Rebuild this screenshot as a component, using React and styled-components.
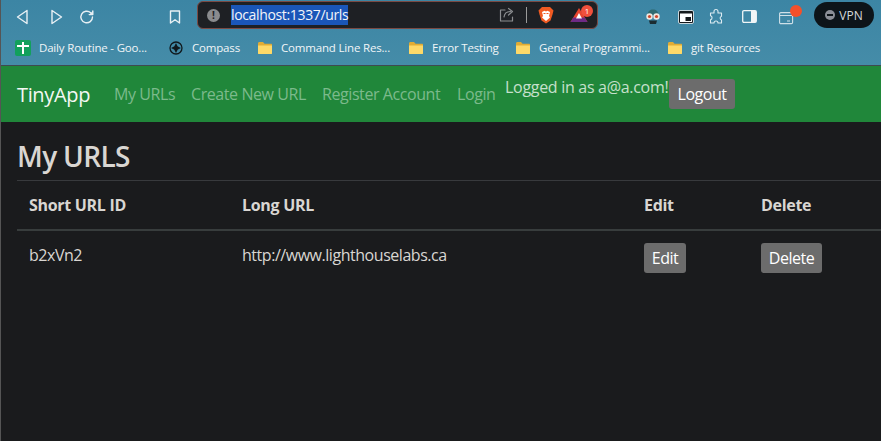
import styled, { createGlobalStyle } from 'styled-components';

const Global = createGlobalStyle`
  html, body { margin: 0; padding: 0; background: #1a1b1d; }
  body { font-family: "Open Sans", "Noto Sans", sans-serif; overflow: hidden; }
  * { box-sizing: border-box; }
`;

const Page = styled.div`
  width: 881px;
  height: 441px;
  border-left: 1px solid #555;
  overflow: hidden;
  background: #1a1b1d;
`;

const Chrome = styled.div`
  height: 66px;
  background: linear-gradient(#3c85a4, #458ca8);
  border-bottom: 1px solid #3f4a50;
`;

const Toolbar = styled.div`
  height: 33px;
  display: flex;
  align-items: center;
  position: relative;
`;

const ToolIcon = styled.span`
  display: flex;
  width: ${({ $w }) => $w || 18}px;
  height: 18px;
  margin-left: ${({ $ml }) => $ml || 0}px;
  align-items: center;
  justify-content: center;
  flex: none;
`;

const Address = styled.div`
  width: 401px;
  height: 28px;
  margin-left: 13px;
  margin-top: -3px;
  background: #1e2024;
  border: 1px solid #7a4a44;
  border-radius: 6px;
  display: flex;
  align-items: center;
  padding-left: 9px;
  flex: none;
`;

const InfoDot = styled.span`
  width: 13px;
  height: 13px;
  border-radius: 50%;
  background: #8a8b8e;
  color: #1e2024;
  font-size: 10px;
  font-weight: 700;
  line-height: 13px;
  text-align: center;
  flex: none;
`;

const UrlText = styled.span`
  margin-left: 11px;
  background: #1a56b8;
  color: #f2f4f8;
  font-size: 14px;
  line-height: 20px;
  letter-spacing: -0.35px;
  width: 117px;
  white-space: nowrap;
`;

const Divider = styled.span`
  width: 1px;
  height: 16px;
  background: #9a9a9a;
  margin-left: 10px;
  flex: none;
`;

const BadgeWrap = styled.span`
  position: relative;
  display: flex;
  width: 18px;
  height: 18px;
  margin-left: ${({ $ml }) => $ml || 0}px;
  flex: none;
`;

const CountBadge = styled.span`
  position: absolute;
  top: -1px;
  right: -5px;
  width: 12px;
  height: 12px;
  border-radius: 50%;
  background: #f0503c;
  color: #fff;
  font-size: 8px;
  line-height: 12px;
  text-align: center;
`;

const OrangeDot = styled.span`
  position: absolute;
  top: -3px;
  right: -5px;
  width: 12px;
  height: 12px;
  border-radius: 50%;
  background: #f4502a;
`;

const VpnPill = styled.div`
  width: 60px;
  height: 26px;
  margin-left: 17px;
  margin-top: -3px;
  border-radius: 13px;
  background: #0d1419;
  color: #d5d8db;
  font-size: 12px;
  display: flex;
  align-items: center;
  justify-content: center;
  gap: 4px;
  flex: none;
`;

const VpnDot = styled.span`
  width: 10px;
  height: 10px;
  border-radius: 50%;
  background: #8b8e96;
  display: flex;
  align-items: center;
  justify-content: center;
  &::after {
    content: '';
    width: 6px;
    height: 2px;
    background: #0d1419;
  }
`;

const Bookmarks = styled.div`
  height: 32px;
  display: flex;
  align-items: center;
  padding-left: 14px;
  padding-bottom: 3px;
`;

const Bookmark = styled.div`
  display: flex;
  align-items: center;
  gap: ${({ $gap }) => $gap || 8}px;
  width: ${({ $w }) => $w}px;
  flex: none;
  color: #f1f5f7;
  font-size: 11.5px;
  letter-spacing: -0.18px;
  white-space: nowrap;
`;

const SheetIcon = styled.span`
  width: 16px;
  height: 16px;
  border-radius: 2px;
  background: #12a05c;
  position: relative;
  flex: none;
  &::before {
    content: '';
    position: absolute;
    left: 2px;
    right: 2px;
    top: 5px;
    height: 2px;
    background: #fff;
  }
  &::after {
    content: '';
    position: absolute;
    left: 7px;
    top: 2px;
    bottom: 2px;
    width: 2px;
    background: #fff;
  }
`;

const Navbar = styled.nav`
  height: 56px;
  background: #20873a;
  display: flex;
  align-items: center;
  padding: 0 16px;
`;

const Brand = styled.a`
  color: #f4f8f4;
  font-size: 20px;
  letter-spacing: -0.35px;
  margin-right: 24px;
  width: 73px;
  white-space: nowrap;
`;

const NavLink = styled.a`
  color: #7cba8c;
  font-size: 16px;
  letter-spacing: -0.42px;
  width: ${({ $w }) => $w}px;
  white-space: nowrap;
  flex: none;
`;

const Greeting = styled.div`
  color: #c6e0cc;
  font-size: 16px;
  letter-spacing: -0.3px;
  width: 164px;
  height: 24px;
  line-height: 24px;
  white-space: nowrap;
  flex: none;
  align-self: flex-start;
  margin-top: 9px;
`;

const Button = styled.button`
  font-family: inherit;
  font-size: 16px;
  letter-spacing: -0.5px;
  line-height: 24px;
  color: #fff;
  background: #6c6c6c;
  border: 0;
  border-radius: 3px;
  height: 30px;
  width: ${({ $w }) => $w}px;
  padding: 0;
  display: block;
`;

const Content = styled.main`
  padding-left: 16px;
`;

const Title = styled.h2`
  margin: 0;
  padding: 17px 0 7px;
  color: #d9d6d2;
  font-size: 28px;
  font-weight: 600;
  line-height: 34px;
  letter-spacing: -0.65px;
`;

const Table = styled.table`
  width: 880px;
  table-layout: fixed;
  border-collapse: collapse;
  color: #d9d6d2;
  font-size: 16px;
  line-height: 24px;
`;

const Th = styled.th`
  width: ${({ $w }) => $w}px;
  padding: 12px;
  text-align: left;
  font-weight: 700;
  letter-spacing: -0.3px;
  border-top: 1px solid #383a3d;
  border-bottom: 2px solid #383d3d;
`;

const Td = styled.td`
  padding: 12px;
  vertical-align: top;
  letter-spacing: -0.46px;
`;

const Stroke = ({ children, w = 18, h = 18, vb = '0 0 18 18', color = '#e8f0f4', sw = 1.4 }) => (
  <svg width={w} height={h} viewBox={vb} fill="none" stroke={color} strokeWidth={sw} strokeLinejoin="round" strokeLinecap="round">
    {children}
  </svg>
);

const Folder = () => (
  <svg width="16" height="14" viewBox="0 0 16 14">
    <path d="M1 2.5C1 1.7 1.6 1 2.4 1H6l1.6 1.8H14c.6 0 1 .4 1 1V12c0 .6-.4 1-1 1H2c-.6 0-1-.4-1-1z" fill="#e0ac34" />
    <path d="M1 4.5h14V12c0 .6-.4 1-1 1H2c-.6 0-1-.4-1-1z" fill="#fdd969" />
  </svg>
);

const bookmarks = [
  { label: 'Command Line Res...', w: 151 },
  { label: 'Error Testing', w: 107 },
  { label: 'General Programmi...', w: 152 },
  { label: 'git Resources', w: 100 },
];

export default function App() {
  return (
    <Page>
      <Global />
      <Chrome>
        <Toolbar>
          <ToolIcon $ml={13}>
            <Stroke><path d="M13 2.500v13L3.500 9z" /></Stroke>
          </ToolIcon>
          <ToolIcon $ml={15}>
            <Stroke><path d="M5 2.500v13L14.500 9z" /></Stroke>
          </ToolIcon>
          <ToolIcon $ml={13}>
            <Stroke><path d="M14.500 9a5.800 5.800 0 1 1-1.800-4.200" /><path d="M14.800 3v3.600h-3.600" fill="#e8f0f4" /></Stroke>
          </ToolIcon>
          <ToolIcon $ml={70}>
            <Stroke><path d="M4.500 3h9v12L9 11.800 4.500 15z" /></Stroke>
          </ToolIcon>
          <Address>
            <InfoDot>!</InfoDot>
            <UrlText>localhost:1337/urls</UrlText>
            <ToolIcon $ml={150}>
              <Stroke color="#8b8d90" sw={1.2}>
                <path d="M7 4H2.500v11h12v-4" />
                <path d="M6 11c.5-3.500 3-5.500 6.500-5.500M10.500 2.500l4 3-4 3.500" />
              </Stroke>
            </ToolIcon>
            <Divider />
            <ToolIcon $ml={10}>
              <svg width="16" height="18" viewBox="0 0 16 18">
                <path d="M4 1h8l2 2 1.500 1.500-1 4-2 6L8 17.500 3.500 14.500l-2-6-1-4L2 3z" fill="#f15a22" />
                <path d="M4 6l2.500-1.200L8 5.500l1.500-.7L12 6l-1 4 1 1.500L8 15l-4-3.500L5 10z" fill="#fff" />
                <path d="M5.500 7.500h2M8.500 7.500h2" stroke="#f15a22" strokeWidth="1" />
              </svg>
            </ToolIcon>
            <BadgeWrap $ml={15}>
              <svg width="18" height="18" viewBox="0 0 18 18">
                <path d="M9 2l8.500 14H.5z" fill="#e8452e" />
                <path d="M.5 16l2.800-4.500h11.400L17.500 16z" fill="#6d2a85" />
                <path d="M9 7l3 5.500H6z" fill="#fff" />
              </svg>
              <CountBadge>1</CountBadge>
            </BadgeWrap>
          </Address>
          <ToolIcon $ml={46}>
            <svg width="18" height="18" viewBox="0 0 18 18">
              <path d="M3.500 7c0-3.500 2.500-5.500 5.500-5.500S14.500 3.500 14.500 7z" fill="#2f6a70" />
              <circle cx="5.500" cy="8.500" r="3.200" fill="#f0e8e0" />
              <circle cx="12.500" cy="8.500" r="3.200" fill="#f0e8e0" />
              <circle cx="5.500" cy="8.500" r="1.600" fill="#d0482c" />
              <circle cx="12.500" cy="8.500" r="1.600" fill="#d0482c" />
              <path d="M5 12.500h8l-1 3.500H6z" fill="#1b2c32" />
            </svg>
          </ToolIcon>
          <ToolIcon $ml={15}>
            <svg width="16" height="14" viewBox="0 0 16 14">
              <rect x=".5" y=".5" width="15" height="13" rx="1.500" fill="#15191c" stroke="#c9d6dc" />
              <rect x="2" y="3.500" width="12" height="8.500" fill="#fff" />
              <rect x="7.500" y="7" width="5.500" height="4" fill="#15191c" />
            </svg>
          </ToolIcon>
          <ToolIcon $ml={12}>
            <Stroke sw={1.1} color="#dcebf1">
              <path d="M7 3.500a2 2 0 0 1 4 0V5h3.500v3.200a2 2 0 0 0 0 3.800v3H11a2 2 0 0 0-4 0H3.500v-3.300a2 2 0 0 0 0-3.900V5H7z" />
            </Stroke>
          </ToolIcon>
          <ToolIcon $ml={15}>
            <svg width="15" height="13" viewBox="0 0 15 13">
              <rect x=".7" y=".7" width="13.600" height="11.600" rx="1.200" fill="none" stroke="#f0f5f7" strokeWidth="1.300" />
              <rect x="9" y="1" width="5" height="11" fill="#f0f5f7" />
            </svg>
          </ToolIcon>
          <BadgeWrap $ml={21}>
            <svg width="15" height="14" viewBox="0 0 15 14" style={{ marginTop: 3 }}>
              <rect x=".6" y="1.600" width="13" height="11" rx="1.200" fill="none" stroke="#cfe0e8" strokeWidth="1.100" />
              <path d="M1 4.500h12.500M8 10h3" stroke="#cfe0e8" strokeWidth="1.100" />
            </svg>
            <OrangeDot />
          </BadgeWrap>
          <VpnPill>
            <VpnDot />
            VPN
          </VpnPill>
        </Toolbar>
        <Bookmarks>
          <Bookmark $w={154}>
            <SheetIcon />
            Daily Routine - Goo...
          </Bookmark>
          <Bookmark $w={88} $gap={9}>
            <svg width="14" height="14" viewBox="0 0 14 14" fill="none" stroke="#10181c" strokeWidth="1.300">
              <circle cx="7" cy="7" r="6" />
              <path d="M7 3.500L8.200 5.800 10.500 7 8.200 8.200 7 10.500 5.800 8.200 3.500 7 5.800 5.800z" fill="#10181c" />
            </svg>
            Compass
          </Bookmark>
          {bookmarks.map((b) => (
            <Bookmark key={b.label} $w={b.w}>
              <Folder />
              {b.label}
            </Bookmark>
          ))}
        </Bookmarks>
      </Chrome>
      <Navbar>
        <Brand>TinyApp</Brand>
        <NavLink $w={77}>My URLs</NavLink>
        <NavLink $w={131}>Create New URL</NavLink>
        <NavLink $w={135}>Register Account</NavLink>
        <NavLink $w={48}>Login</NavLink>
        <Greeting>Logged in as a@a.com!</Greeting>
        <Button $w={66}>Logout</Button>
      </Navbar>
      <Content>
        <Title>My URLS</Title>
        <Table>
          <thead>
            <tr>
              <Th $w={213}>Short URL ID</Th>
              <Th $w={402}>Long URL</Th>
              <Th $w={117}>Edit</Th>
              <Th>Delete</Th>
            </tr>
          </thead>
          <tbody>
            <tr>
              <Td>b2xVn2</Td>
              <Td>http://www.lighthouselabs.ca</Td>
              <Td><Button $w={42}>Edit</Button></Td>
              <Td><Button $w={61}>Delete</Button></Td>
            </tr>
          </tbody>
        </Table>
      </Content>
    </Page>
  );
}
